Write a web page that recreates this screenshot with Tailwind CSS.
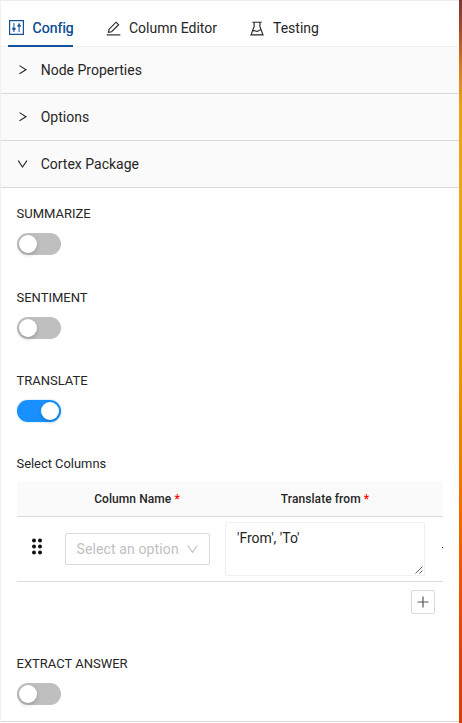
<!DOCTYPE html>
<html lang="en">
<head>
<meta charset="utf-8">
<title>Config</title>
<script src="https://cdn.jsdelivr.net/npm/@tailwindcss/browser@4"></script>
</head>
<body class="flex h-[723px] w-[462px] overflow-hidden bg-white font-[Roboto,sans-serif] text-[#262626]">
<main class="flex h-[722px] w-[459px] flex-col border-t border-b border-l border-t-[#ececec] border-b-[#d9d9d9] border-l-[#f0f0f0]">
  <nav class="flex h-[46px] shrink-0 border-b border-[#f0f0f0] pl-[7px] text-[14px] leading-[22px]">
    <div class="flex h-[46px] w-[65px] items-center border-b-2 border-[#14539a] pt-[9px] text-[#14539a]">
      <svg class="ml-[1px] h-[15px] w-[15px] shrink-0" viewBox="0 0 15 15" fill="none" stroke="currentColor"><path d="M.6 .6h13.8v13.8H.6z" stroke-width="1.2"/><path d="M4.9 3v9M10.1 3v9" stroke-width="1"/><path d="M3.2 7.8h3.4v1.6l-1.7 1.2-1.7-1.2zM8.4 5.2l1.7-1.2 1.7 1.2v1.5H8.4z" fill="currentColor" stroke="none"/></svg>
      <span class="ml-[8.5px] tracking-[0.05px] text-shadow-[0_0_0.25px_currentColor]">Config</span>
    </div>
    <div class="ml-[33px] flex h-[45px] items-center pt-[9px]">
      <svg class="h-[15px] w-[15px] shrink-0" viewBox="0 0 15 15" fill="none" stroke="currentColor" stroke-width="1.15"><path d="M.7 13.9h13.6"/><path d="M2.5 11.2l.6-3 7-7 2.5 2.5-7 7z"/></svg>
      <span class="ml-[8px]">Column Editor</span>
    </div>
    <div class="ml-[33px] flex h-[45px] items-center pt-[9px]">
      <svg class="h-[15px] w-[14px] shrink-0" viewBox="0 0 14 15" fill="none" stroke="currentColor" stroke-width="1.15"><path d="M2.3 1.2h9.4M4.1 1.2v4.4L1 13.9h12L9.9 5.6V1.2"/><path d="M2.9 10c2-1.3 3 .9 4.8 .2 1.1-.4 1.5-1.5 3.2-1.4"/></svg>
      <span class="ml-[9px]">Testing</span>
    </div>
  </nav>
  <section class="flex h-[47px] shrink-0 items-center border-b border-[#d9d9d9] bg-[#fafafa] pl-[17px] text-[14px]">
    <svg class="h-[10px] w-[10px]" viewBox="0 0 10 10" fill="none" stroke="currentColor" stroke-width="1.1"><path d="M1.5 .6L8 4.7 1.5 8.8"/></svg><span class="ml-[12.7px]">Node Properties</span>
  </section>
  <section class="flex h-[47px] shrink-0 items-center border-b border-[#d9d9d9] bg-[#fafafa] pl-[17px] text-[14px]">
    <svg class="h-[10px] w-[10px]" viewBox="0 0 10 10" fill="none" stroke="currentColor" stroke-width="1.1"><path d="M1.5 .6L8 4.7 1.5 8.8"/></svg><span class="ml-[12.7px]">Options</span>
  </section>
  <section class="flex h-[47px] shrink-0 items-center border-b border-[#d9d9d9] bg-[#fafafa] pl-[17px] text-[14px]">
    <svg class="h-[10px] w-[10px]" viewBox="0 0 10 10" fill="none" stroke="currentColor" stroke-width="1.1"><path d="M.3 1.6L4.5 8 8.9 1.6"/></svg><span class="ml-[12.7px]">Cortex Package</span>
  </section>
  <div class="pt-[16px] pl-[15.5px] text-[13px] leading-[20px]">
    <div class="h-[83px]">
      <div>SUMMARIZE</div>
      <div class="mt-[9px] flex h-[22px] w-[44px] rounded-full bg-[#bfbfbf] p-[2px]"><span class="h-[18px] w-[18px] rounded-full bg-white shadow-[0_2px_4px_rgba(0,35,11,0.2)]"></span></div>
    </div>
    <div class="h-[84px] pt-[0.5px]">
      <div>SENTIMENT</div>
      <div class="mt-[9px] flex h-[22px] w-[44px] rounded-full bg-[#bfbfbf] p-[2px]"><span class="h-[18px] w-[18px] rounded-full bg-white shadow-[0_2px_4px_rgba(0,35,11,0.2)]"></span></div>
    </div>
    <div class="h-[83px]">
      <div>TRANSLATE</div>
      <div class="mt-[8.5px] flex h-[22px] w-[44px] justify-end rounded-full bg-[#1890ff] p-[2px] shadow-[0_0_2px_rgba(24,144,255,0.4)]"><span class="h-[18px] w-[18px] rounded-full bg-white shadow-[0_2px_4px_rgba(0,35,11,0.2)]"></span></div>
    </div>
    <div class="h-[200px]">
      <div class="text-[12.9px]">Select Columns</div>
      <div class="mt-[8px] w-[426.5px] overflow-hidden">
        <div class="flex h-[35px] items-center border-b border-[#dcdcdc] bg-[#fafafa] text-[12px] font-medium tracking-[0.08px]">
          <div class="w-[41px]"></div>
          <div class="w-[159px] text-center">Column Name <span class="text-[#ff0000]">*</span></div>
          <div class="w-[217px] text-center">Translate from <span class="text-[#ff0000]">*</span></div>
        </div>
        <div class="flex h-[65px] items-center border-b border-[#dcdcdc]">
          <svg class="mr-[22px] ml-[14px] mb-[5px] h-[17px] w-[12px] shrink-0" viewBox="0 0 12 17" fill="#111"><circle cx="3" cy="2.6" r="2"/><circle cx="9" cy="2.6" r="2"/><circle cx="3" cy="8.6" r="2"/><circle cx="9" cy="8.6" r="2"/><circle cx="3" cy="14.6" r="2"/><circle cx="9" cy="14.6" r="2"/></svg>
          <div class="flex h-[32px] w-[145px] shrink-0 items-center rounded-[2px] border border-[#d9d9d9] pl-[11px] text-[14px] text-[#bfbfbf]"><span class="tracking-[0.12px] whitespace-nowrap">Select an option</span><svg class="ml-[8px] h-[10px] w-[11px] shrink-0" viewBox="0 0 11 10" fill="none" stroke="currentColor" stroke-width="1.1"><path d="M.7 1.5L5.5 8.3l4.8-6.8"/></svg></div>
          <div class="ml-[15.5px] flex h-[54px] w-[200px] shrink-0 items-end justify-end rounded-[2px] border border-[#f0f0f0] text-[14px]"><span class="grow self-start pt-[5px] pl-[11px]">'From', 'To'</span><svg class="mr-[1px] mb-[1px] h-[8px] w-[8px]" viewBox="0 0 8 8" fill="none" stroke="#555" stroke-width=".9"><path d="M.5 7.5l7-7M4.5 7.5l3-3"/></svg></div>
          <span class="mb-[4px] ml-[17px] h-[1px] w-[1px] shrink-0 bg-[#333]"></span>
        </div>
        <div class="flex justify-end pt-[8px] pr-[8px]"><div class="flex h-[24px] w-[24px] items-center justify-center rounded-[2px] border border-[#d9d9d9]"><svg class="h-[12px] w-[12px]" viewBox="0 0 12 12" fill="none" stroke="#555" stroke-width="1.2"><path d="M6 .5v11M.5 6h11"/></svg></div></div>
      </div>
    </div>
    <div>
      <div>EXTRACT ANSWER</div>
      <div class="mt-[9px] flex h-[22px] w-[44px] rounded-full bg-[#bfbfbf] p-[2px]"><span class="h-[18px] w-[18px] rounded-full bg-white shadow-[0_2px_4px_rgba(0,35,11,0.2)]"></span></div>
    </div>
  </div>
</main>
<div class="h-full w-[3px] shrink-0 bg-[linear-gradient(180deg,#7d3535_0px,#a54a2c_30px,#d47a22_65px,#eda01a_105px,#eca61a_190px,#ef9803_350px,#ef7d02_460px,#e85f02_560px,#d34803_660px,#cf4403_723px)]"></div>
</body>
</html>
